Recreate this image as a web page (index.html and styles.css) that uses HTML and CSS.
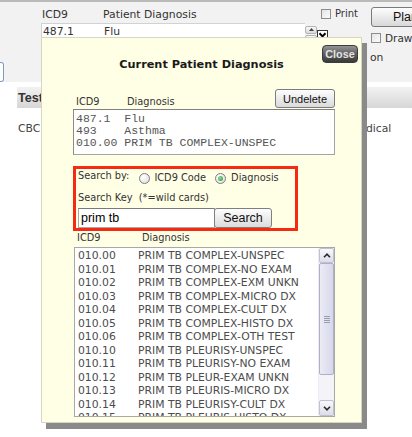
FILE: index.html
```html
<!DOCTYPE html>
<html>
<head>
<meta charset="utf-8">
<title>Current Patient Diagnosis</title>
<link rel="stylesheet" href="styles.css">
</head>
<body>
<div class="page">
  <header class="top">
    <div class="stub-col"><div class="stub"></div></div>
    <div class="diag">
      <div class="diag-head">
        <span class="c-code">ICD9</span><span>Patient Diagnosis</span>
        <label class="print"><span class="cb"></span><span>Print</span></label>
      </div>
      <div class="diag-select">
        <div class="diag-value"><span class="c-code">487.1</span><span>Flu</span></div>
        <div class="spin">
          <span class="spin-btn"><svg width="5" height="3" viewBox="0 0 5 3"><path d="M0 3 L2.5 0 L5 3Z" fill="#444"/></svg></span>
          <span class="spin-btn"><svg width="5" height="3" viewBox="0 0 5 3"><path d="M0 0 L2.5 3 L5 0Z" fill="#444"/></svg></span>
        </div>
        <svg class="drop" width="11" height="10" viewBox="0 0 11 10"><rect x="0.5" y="0.5" width="10" height="9" fill="#fff" stroke="#333"/><path d="M2.5 3.2 L5.5 6.4 L8.5 3.2" fill="none" stroke="#000" stroke-width="2"/></svg>
      </div>
    </div>
    <div class="side">
      <button class="plan">Plan</button>
      <label class="draw"><span class="cb"></span><span>Draw</span></label>
      <span class="side-note">on</span>
    </div>
  </header>
  <section class="tests">
    <div class="tests-head"><span class="th">Tests</span></div>
    <div class="tests-row"><span>CBC</span><span>Medical</span></div>
  </section>
</div>

<div class="modal">
  <button class="close">Close</button>
  <h1 class="title">Current Patient Diagnosis</h1>
  <div class="l1-head">
    <span class="l1-code">ICD9</span><span>Diagnosis</span>
    <button class="undelete">Undelete</button>
  </div>
  <div class="l1">
    <div class="mono">487.1  Flu</div>
    <div class="mono">493    Asthma</div>
    <div class="mono">010.00 PRIM TB COMPLEX-UNSPEC</div>
  </div>
  <div class="search">
    <div class="s-row1">
      <span class="s-by">Search by:</span>
      <label class="opt"><span class="radio"></span><span>ICD9 Code</span></label>
      <label class="opt opt2"><span class="radio on"></span><span>Diagnosis</span></label>
    </div>
    <div class="s-row2">Search Key&nbsp; (*=wild cards)</div>
    <div class="s-row3">
      <div class="s-input">prim tb</div>
      <button class="s-btn">Search</button>
    </div>
  </div>
  <div class="l2-head"><span class="l2-code">ICD9</span><span>Diagnosis</span></div>
  <div class="l2">
    <div class="rows">
      <div class="row"><span class="code">010.00</span><span>PRIM TB COMPLEX-UNSPEC</span></div>
      <div class="row"><span class="code">010.01</span><span>PRIM TB COMPLEX-NO EXAM</span></div>
      <div class="row"><span class="code">010.02</span><span>PRIM TB COMPLEX-EXM UNKN</span></div>
      <div class="row"><span class="code">010.03</span><span>PRIM TB COMPLEX-MICRO DX</span></div>
      <div class="row"><span class="code">010.04</span><span>PRIM TB COMPLEX-CULT DX</span></div>
      <div class="row"><span class="code">010.05</span><span>PRIM TB COMPLEX-HISTO DX</span></div>
      <div class="row"><span class="code">010.06</span><span>PRIM TB COMPLEX-OTH TEST</span></div>
      <div class="row"><span class="code">010.10</span><span>PRIM TB PLEURISY-UNSPEC</span></div>
      <div class="row"><span class="code">010.11</span><span>PRIM TB PLEURISY-NO EXAM</span></div>
      <div class="row"><span class="code">010.12</span><span>PRIM TB PLEUR-EXAM UNKN</span></div>
      <div class="row"><span class="code">010.13</span><span>PRIM TB PLEURIS-MICRO DX</span></div>
      <div class="row"><span class="code">010.14</span><span>PRIM TB PLEURISY-CULT DX</span></div>
      <div class="row"><span class="code">010.15</span><span>PRIM TB PLEURIS-HISTO DX</span></div>
    </div>
    <div class="sb">
      <div class="sb-btn"><svg width="8" height="5" viewBox="0 0 8 5"><path d="M1 4.2 L4 1.2 L7 4.2" fill="none" stroke="#2a2a2a" stroke-width="1.6"/></svg></div>
      <div class="sb-thumb"><span class="grip"></span></div>
      <div class="sb-track"></div>
      <div class="sb-btn"><svg width="8" height="5" viewBox="0 0 8 5"><path d="M1 0.8 L4 3.8 L7 0.8" fill="none" stroke="#2a2a2a" stroke-width="1.6"/></svg></div>
    </div>
  </div>
</div>
</body>
</html>
```

FILE: styles.css
```css
* { box-sizing: border-box; }
html, body { margin: 0; padding: 0; width: 412px; height: 437px; overflow: hidden; }
body {
  position: relative;
  background: #fff;
  font-family: "DejaVu Sans", Verdana, sans-serif;
  font-size: 10.8px;
  color: #333;
}
button { font-family: inherit; margin: 0; padding: 0; }

/* ---------- background page ---------- */
.top {
  display: grid;
  grid-template-columns: 41px 321px 1fr;
  height: 82px;
  background: #f2f2f2;
  border-top: 2px solid #bababa;
}
.stub-col { padding-top: 60px; }
.stub {
  width: 4px; height: 20px;
  border: 1px solid #7f9db9; border-left: 0;
  border-radius: 0 3px 3px 0;
  background: #fff;
}
.diag { display: flex; flex-direction: column; }
.diag-head {
  height: 21px;
  display: flex;
  align-items: flex-end;
  padding-bottom: 2px;
  line-height: 13px;
}
.c-code { width: 62px; padding-left: 1px; }
.print {
  margin-left: auto;
  margin-right: 4px;
  align-self: flex-start;
  margin-top: 6px;
  display: flex; align-items: center; gap: 4px;
  font-size: 10px; line-height: 12px;
}
.cb {
  width: 10px; height: 10px;
  border: 1px solid #8d8d8d;
  background: linear-gradient(135deg, #e4e4e4, #fbfbfb);
}
.diag-select { height: 22px; display: flex; align-items: center; }
.diag-value {
  width: 264px; height: 22px;
  display: flex; align-items: center;
  background: #fff;
  border: 1px solid #d2d2d2; border-right: 0;
  line-height: 13px;
  padding-bottom: 5px;
}
.spin { width: 12px; height: 17px; display: flex; flex-direction: column; gap: 1px; }
.spin-btn {
  flex: 1;
  display: flex; align-items: center; justify-content: center;
  border: 1px solid #b4b4b4; border-radius: 2px;
  background: linear-gradient(#fafafa, #d9d9d9);
}
.drop { display: block; margin-top: 1px; }
.side { display: flex; flex-direction: column; align-items: flex-start; padding-left: 9px; }
.plan {
  margin-top: 5px;
  width: 69px; height: 20px; flex-shrink: 0;
  border: 1px solid #7a7a7a; border-radius: 3px;
  background: linear-gradient(#fdfdfd, #d8d8d8);
  font-family: "Liberation Sans", Arial, sans-serif;
  font-size: 12.5px; color: #111;
}
.draw { margin-top: 5px; display: flex; align-items: center; gap: 4px; font-size: 10.5px; line-height: 12px; }
.side-note { margin-top: 8px; margin-left: -1px; line-height: 12px; }

.tests { padding-top: 5px; }
.tests-head {
  margin-left: 17px;
  height: 21px;
  display: flex; align-items: center;
  padding-left: 1px;
  background: linear-gradient(#f2f2f2, #d6d6d6);
}
.th { font: bold 12.6px "Liberation Sans", Arial, sans-serif; color: #333; }
.tests-row {
  display: grid;
  grid-template-columns: 332px 1fr;
  padding-left: 18px;
  margin-top: 14px;
  line-height: 13px;
  color: #444;
}

/* ---------- modal ---------- */
.modal {
  position: absolute;
  left: 41px; top: 37px;
  width: 321px; height: 386px;
  background: #ffffe6;
  border: 1px solid #d6d6c2;
  box-shadow: 5px 6px 0 #8a8a8a;
  padding: 19px 26px 0 31px;
  display: flex; flex-direction: column;
}
.close {
  position: absolute;
  top: 7px; right: 3px;
  width: 36px; height: 18px;
  border: 1px solid #3c3c3c; border-radius: 4px;
  background: linear-gradient(#949494, #5e5e5e 50%, #3a3a3a);
  color: #e4e4e4;
  font-family: "Liberation Sans", Arial, sans-serif;
  font-weight: bold; font-size: 10.8px;
}
.title {
  margin: 0 -26px 0 -31px;
  height: 16px; line-height: 16px;
  text-align: center;
  font-size: 11.3px; font-weight: bold;
  color: #1a1a1a;
}
.l1-head {
  margin-top: 16px;
  height: 19px;
  display: flex; align-items: flex-end;
  font-size: 9.8px; line-height: 12px;
  padding-left: 3px;
}
.l1-code { width: 51px; }
.undelete {
  margin-left: auto;
  width: 60px; height: 19px;
  border: 1px solid #7c7c7c; border-radius: 3px;
  background: linear-gradient(#fefefe, #dadada);
  font-family: "Liberation Sans", Arial, sans-serif;
  font-size: 11px; color: #111;
}
.l1 {
  margin-top: 1px;
  height: 46px;
  background: #fff;
  border: 1px solid #a4a4a4; border-top-color: #808080; border-left-color: #8c8c8c;
  padding: 3px 2px;
}
.mono {
  font-family: "Liberation Mono", "Courier New", monospace;
  font-size: 11.5px; line-height: 12px;
  white-space: pre;
  color: #555;
}
.search {
  margin-top: 11px;
  width: 225px; height: 65px;
  border: 3px solid #f42b12;
  padding: 0 2px;
  font-size: 9.8px;
  color: #333;
}
.s-row1 { height: 18px; display: flex; align-items: center; }
.s-by { align-self: flex-start; margin-top: 1px; line-height: 12px; }
.opt { display: flex; align-items: center; gap: 4px; margin-left: 10px; line-height: 12px; }
.opt2 { margin-left: 9px; gap: 5px; }
.radio {
  width: 11px; height: 11px; border-radius: 50%;
  border: 1px solid #7d7d7d;
  background: radial-gradient(circle at 35% 35%, #ffffff, #dcdcdc);
  display: flex; align-items: center; justify-content: center;
}
.radio.on::after {
  content: "";
  width: 5px; height: 5px; border-radius: 50%;
  background: radial-gradient(circle at 40% 40%, #8fe08f, #2e8b2e);
}
.s-row2 { padding-top: 5px; line-height: 12px; height: 21px; }
.s-row3 { display: flex; height: 20px; }
.s-input {
  width: 137px; height: 20px;
  background: #fff;
  border: 1px solid #a8a8a8; border-top-color: #7a7a7a;
  padding-left: 2px;
  font-family: "Liberation Sans", Arial, sans-serif;
  font-size: 12.5px; line-height: 18px;
  color: #000;
}
.s-btn {
  margin-left: -1px;
  width: 58px; height: 20px;
  border: 1px solid #7f7f7f; border-radius: 3px;
  background: linear-gradient(#fdfdfd, #dcdcdc);
  font-family: "Liberation Sans", Arial, sans-serif;
  font-size: 12.5px; color: #111;
}
.l2-head {
  margin-top: 1px;
  display: flex;
  font-size: 9.8px; line-height: 12px;
  padding-left: 4px;
}
.l2-code { width: 65px; }
.l2 {
  margin-top: 3px;
  margin-left: 1px;
  height: 170px;
  background: #fff;
  border: 1px solid #a8a8a8;
  display: flex;
}
.rows { flex: 1; overflow: hidden; padding: 1px 0 0 3px; color: #4c4c4c; }
.row { display: flex; line-height: 13.5px; white-space: nowrap; }
.code { width: 60px; flex-shrink: 0; }
.sb {
  width: 16px;
  display: flex; flex-direction: column;
  background: #f4f4f8;
  border-left: 1px solid #ececf2;
}
.sb-btn {
  height: 15px;
  display: flex; align-items: center; justify-content: center;
  border: 1px solid #bfc0d2; border-radius: 2px;
  background: linear-gradient(#f8f8fc, #dcdde9);
}
.sb-btn:last-child { height: 16px; }
.sb-thumb {
  height: 112px;
  display: flex; align-items: center; justify-content: center;
  border: 1px solid #aeb0c8; border-radius: 2px;
  background: linear-gradient(to right, #ececf6, #d6d7ea);
}
.grip {
  width: 6px; height: 7px;
  background: repeating-linear-gradient(#9a9cb4 0 1px, transparent 1px 2px);
}
.sb-track { flex: 1; }
```
